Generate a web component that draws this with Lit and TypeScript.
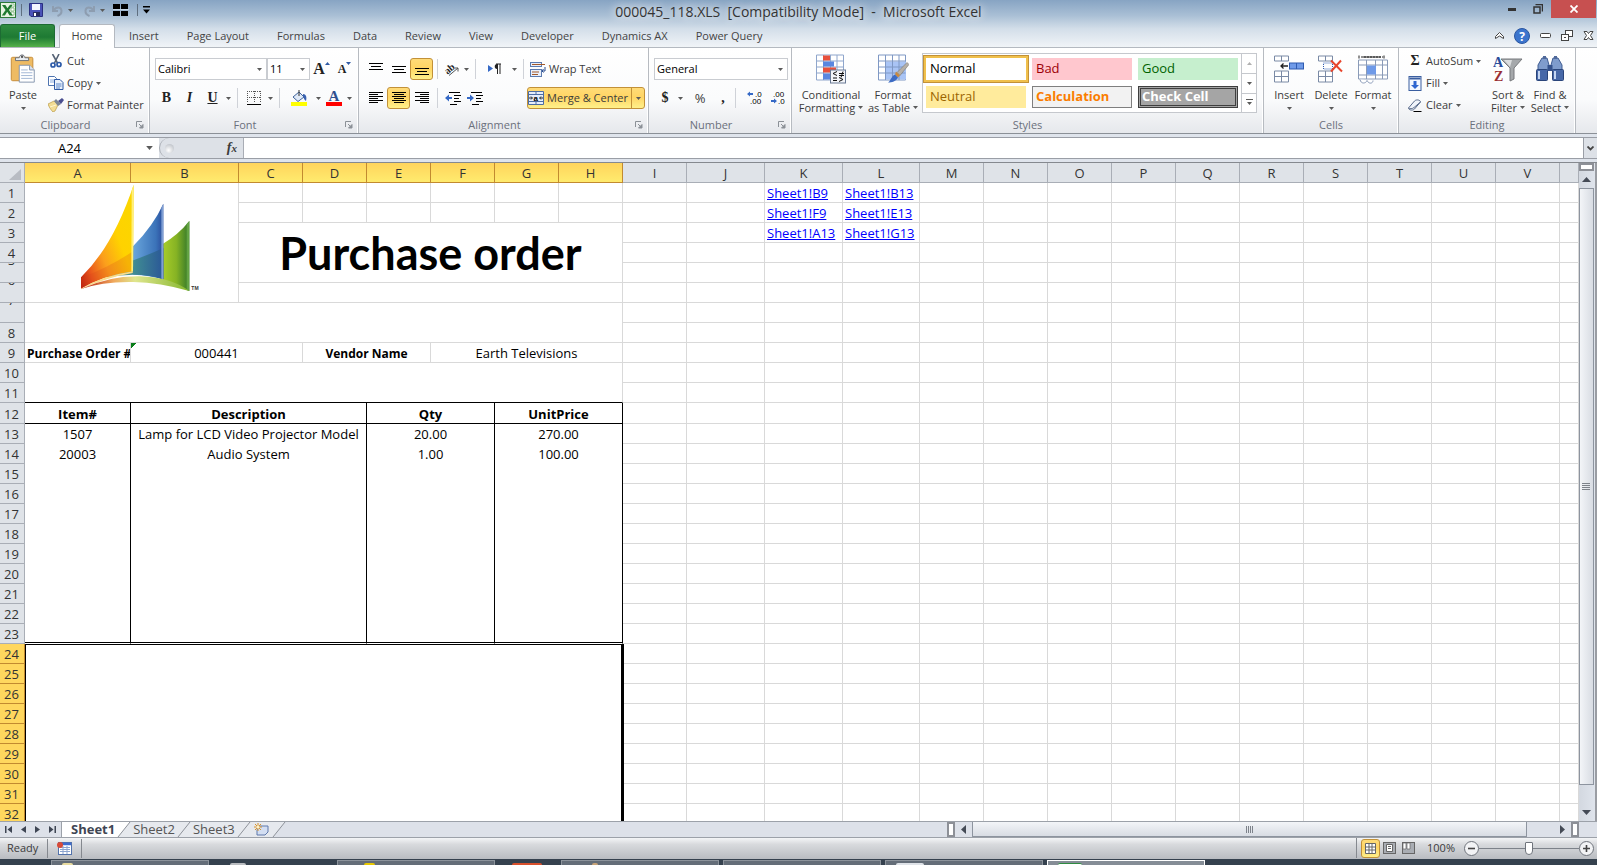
import { LitElement, html, svg, css, nothing } from "lit";
import { customElement, state } from "lit/decorators.js";
import { classMap } from "lit/directives/class-map.js";

const COLUMNS: [string, number][] = [
  ["A", 106], ["B", 108], ["C", 64], ["D", 64], ["E", 64], ["F", 64], ["G", 64], ["H", 64],
  ["I", 64], ["J", 78], ["K", 78], ["L", 77], ["M", 64], ["N", 64], ["O", 64], ["P", 64],
  ["Q", 64], ["R", 64], ["S", 64], ["T", 64], ["U", 64], ["V", 64],
];
const ROWS = Array.from({ length: 32 }, (_, i) => i + 1);
const LINKS: Record<string, string> = {
  K1: "Sheet1!B9", L1: "Sheet1!B13", K2: "Sheet1!F9", L2: "Sheet1!E13", K3: "Sheet1!A13", L3: "Sheet1!G13",
};
const ITEMS: Record<number, string[]> = {
  13: ["1507", "Lamp for LCD Video Projector Model", "20.00", "270.00"],
  14: ["20003", "Audio System", "1.00", "100.00"],
};
const TABS = ["Insert", "Page Layout", "Formulas", "Data", "Review", "View", "Developer", "Dynamics AX", "Power Query"];

const icon = (w: number, h: number, body: unknown) =>
  html`<svg class="ico" width=${w} height=${h} viewBox="0 0 ${w} ${h}" aria-hidden="true">${body}</svg>`;

const caret = html`<svg class="caret" width="5" height="3" viewBox="0 0 5 3" aria-hidden="true"><path d="M0 0h5L2.5 3z" fill="#5a5a5a" /></svg>`;

const lines = (spec: [number, number, number][], w = 16, h = 14) =>
  icon(w, h, spec.map(([x, y, len]) => svg`<rect x=${x} y=${y} width=${len} height="1" fill="#000"/>`));

const icons = {
  excel: icon(16, 16, svg`<rect x=".5" y=".5" width="15" height="15" fill="#e7f3e3" stroke="#2d7a3a"/><path d="M11 2h3v3h-3zM11 6h3v3h-3zM11 10h3v3h-3z" fill="#fff" stroke="#5fa35f" stroke-width=".6"/><path d="M2 3h3.4l2 3.3L9.8 3h2.8L9 8l3.8 5.4H9.6L7.2 9.8 4.9 13.4H1.8L5.6 8z" fill="#1f7a30"/>`),
  save: icon(14, 14, svg`<path d="M.5.5h13v13H2L.5 12z" fill="#4a52b8" stroke="#2a2f80"/><rect x="3" y="1" width="8" height="6" fill="#f4f6ff"/><rect x="4" y="9" width="7" height="4" fill="#272b60"/><rect x="5" y="10" width="2" height="3" fill="#fff"/>`),
  undo: icon(13, 13, svg`<path d="M2 2v5h5M2.5 6.5C5 2.5 10 2.5 10.5 6.5 10.7 9 9 11 6.5 12" fill="none" stroke="#8d9db0" stroke-width="2"/>`),
  redo: icon(13, 13, svg`<path d="M11 2v5H6M10.5 6.5C8 2.5 3 2.5 2.5 6.5 2.3 9 4 11 6.5 12" fill="none" stroke="#8d9db0" stroke-width="2"/>`),
  tiles: icon(16, 12, svg`<path d="M0 0h7v5H0zM8 0h7v5H8zM0 7h7v5H0zM8 7h7v5H8z"/><path d="M0 5.5h16" stroke="#dfe8f0" stroke-width=".6"/>`),
  custom: icon(7, 8, svg`<path d="M0 0h7v1.5H0zM0 3.5h7L3.5 7.5z"/>`),
  paste: icon(28, 32, svg`<rect x="1.5" y="3.5" width="23" height="25" rx="1.5" fill="#eebb63" stroke="#c48a35"/><path d="M6 7V4h4c0-4 6-4 6 0h4v3z" fill="#e9edf1" stroke="#6a6f77"/><circle cx="13" cy="3" r="1.3" fill="#555"/><path d="M10 12h11l5 5v13H10z" fill="#fff" stroke="#8193ad"/><path d="M21 12v5h5" fill="#dbe4f2" stroke="#8193ad"/><path d="M12 17h7M12 20h12M12 23h12M12 26h12" stroke="#9fb4d3"/>`),
  cut: icon(12, 14, svg`<path d="M2.5 0 7.5 9M9 0 4.5 9" stroke="#566375" stroke-width="1.6"/><circle cx="3" cy="11" r="2" fill="none" stroke="#2c5aa8" stroke-width="1.7"/><circle cx="9" cy="10.5" r="2" fill="none" stroke="#2c5aa8" stroke-width="1.7"/>`),
  copy: icon(16, 14, svg`<path d="M.5.5h6l2 2v7h-8z" fill="#fff" stroke="#4e74b0"/><path d="M2 4h5M2 6h5" stroke="#86a8db"/><path d="M6.5 3.5h5.5l3 3v7H6.5z" fill="#eaf1fb" stroke="#2f5aa5"/><path d="M8 8h5.5M8 10h5.5M8 12h4" stroke="#5b86c8"/>`),
  painter: icon(16, 14, svg`<path d="M0 6l6-3 4 4-3 6-2 1C3 12 1 9 0 6z" fill="#f3dd94" stroke="#b99a45" stroke-width=".7"/><path d="M2 9l6-2" stroke="#fff6cf"/><path d="M6 3l2-2 5 5-3 2z" fill="#7d8694"/><path d="M10 3l4-3 2 2-3 4z" fill="#4a4e8f"/>`),
  launch: icon(8, 8, svg`<path d="M.5 6V.5H6" fill="none" stroke="#8b9097"/><path d="M3 3l3.5 3.5M7 3.5V7H3.5z" stroke="#8b9097" fill="#8b9097"/>`),
  borders: icon(14, 14, svg`<path d="M.5 0v12M13.5 0v12M0 .5h14M7.5 0v12M0 6.5h14" fill="none" stroke="#555" stroke-dasharray="1 1"/><path d="M0 13.5h14" stroke="#000"/>`),
  bucket: icon(17, 16, svg`<rect y="12" width="16" height="4" fill="#ff0"/><path d="M2 7l6-5 5 5-6 4.500z" fill="#dfe9f7" stroke="#40649b"/><path d="M8 0v6" stroke="#333"/><path d="M12 4c3 0 4 3 3 7-2-1-2-3-3-5z" fill="#3a62b0"/>`),
  orient: icon(20, 18, svg`<text x="3" y="12" font-size="10" font-weight="bold" font-family="Liberation Serif" fill="#222" transform="rotate(-40 8 10)">ab</text><path d="M7 15.500 16 8M16 8h-3.500M16 8v3.500" stroke="#555" fill="none"/>`),
  rtl: icon(14, 12, svg`<path d="M0 2l5 3.500L0 9z" fill="#3569c6"/><path d="M8 1h5M9.500 1v10M12 1v10" stroke="#222" fill="none"/><path d="M9 1c-3 0-3 5 0 5z" fill="#222"/>`),
  wrap: icon(16, 15, svg`<rect x=".5" y=".5" width="11" height="4" fill="#eaf0fa" stroke="#5b7bb0"/><path d="M2 2.500h13" stroke="#a55a2a"/><rect x=".5" y="7.500" width="11" height="7" fill="#eaf0fa" stroke="#5b7bb0"/><path d="M2 10h7M2 12.500h6" stroke="#a55a2a"/><path d="M15 5v4h-3M13.500 7 12 9l1.500 1.500" stroke="#274b8f" fill="none"/>`),
  merge: icon(16, 14, svg`<path d="M.5.5h15v13H.5zM.5 3.500h15M.5 10.500h15M8 .5v3M8 10.500v3" fill="#e6eefa" stroke="#4d6da3"/><path d="M1 7h3M12 7h3M3 5.500 4.500 7 3 8.500M13 5.500 11.500 7 13 8.500" stroke="#222" fill="none"/><text x="5.500" y="9.500" font-size="8" font-weight="bold" font-family="Liberation Sans">a</text>`),
  decInd: icon(16, 13, svg`<path d="M4 .5h11M9 3.500h7M9 6.500h5M9 9.500h7M5 12.500h7" stroke="#000"/><path d="M0 6l4-3.500v2.500h3v2H4v2.500z" fill="#3569c6"/>`),
  incInd: icon(16, 13, svg`<path d="M4 .5h11M9 3.500h7M9 6.500h5M9 9.500h7M5 12.500h7" stroke="#000"/><path d="M7 6 3 2.500v2.500H0v2h3v2.500z" fill="#3569c6"/>`),
  incDec: icon(16, 16, svg`<path d="M0 4l3-2.500V3h3v2H3v1.500z" fill="#3569c6"/><text x="8" y="7" font-size="8" font-family="Liberation Sans">.0</text><text x="3" y="14" font-size="8" font-family="Liberation Sans">.00</text>`),
  decDec: icon(16, 16, svg`<path d="M7 11 4 8.500V10H1v2h3v1.500z" fill="#3569c6"/><text x="3" y="7" font-size="8" font-family="Liberation Sans">.00</text><text x="8" y="14" font-size="8" font-family="Liberation Sans">.0</text>`),
  condFmt: icon(30, 29, svg`<path d="M.5.5h27v25H.5zM.5 6.500h27M.5 12.500h27M.5 18.500h27M7.500.5v25M14.500.5v25M21 .5v25" fill="#fff" stroke="#8fa6cc"/><rect x="7" y="1" width="7" height="5" fill="#e8503c"/><rect x="7" y="7" width="11" height="5" fill="#5a86e0"/><rect x="7" y="13" width="13" height="5" fill="#e8503c"/><rect x="7" y="19" width="7" height="6" fill="#5a86e0"/><rect x="14.500" y="15.500" width="15" height="13" fill="#f4f6fa" stroke="#6a7a95"/><path d="M21 17l-4 2 4 2M17 23.500h4M17 26h4M23 19h5M23 21h5M27 17l-2 6M23 23l4 2-4 2" stroke="#111" fill="none"/>`),
  table: icon(31, 29, svg`<path d="M.5.5h27v25H.5z" fill="#fff" stroke="#7f98c4"/><rect x="7" y="7" width="21" height="18" fill="#a9c4f5"/><path d="M.5 6.500h27M.5 12.500h27M.5 18.500h27M7.500.5v25M14.500.5v25M21 .5v25" stroke="#7f98c4"/><path d="M29 8l2 2-9 11-3-3z" fill="#b6b0a8" stroke="#7b756c" stroke-width=".6"/><path d="M18 17l4 4-2 2-3-3z" fill="#c98a3f"/><path d="M17 20l3 3c-2 4-6 5-10 5 3-2 3-6 7-8z" fill="#3d6cc4"/>`),
  insert: icon(31, 27, svg`<path d="M.5.5h14v5H.5zM7.500.5v5M.5 15.500h14v11H.5zM.5 21h14M7.500 15.500v11" fill="#fff" stroke="#7a8aa5"/><rect x="15.500" y="7.500" width="14" height="6" fill="#6f9ae8" stroke="#2f5bb0"/><path d="M22.500 7.500v6" stroke="#2f5bb0"/><path d="M14 10.500H7M9.500 8 7 10.500 9.500 13" stroke="#222" fill="none" stroke-width="1.3"/>`),
  remove: icon(26, 27, svg`<path d="M.5.5h14v5H.5zM7.500.5v5M.5 15.500h14v11H.5zM.5 21h14M7.500 15.500v11" fill="#fff" stroke="#7a8aa5"/><path d="M5.500 7.500h9v6h-9z" fill="none" stroke="#2f5bb0" stroke-dasharray="1 1"/><path d="M13 5l11 11M23 5 13 16" stroke="#e8452c" stroke-width="2"/>`),
  format: icon(31, 29, svg`<path d="M1 1v3M26 1v3M5 2.500h18" stroke="#222"/><path d="M3 2.500h22" stroke="#222" stroke-dasharray="2 1"/><path d="M.5 5.500h29v19H.5zM.5 10.500h29M.5 20.500h29M8.500 5.500v19M17.500 5.500v19M24.500 5.500v19" fill="#fff" stroke="#8a9bb8"/><rect x="9" y="11" width="9" height="9" fill="#6f9ae8"/><path d="M2 25c1 5 6 4 7 1 2 4 6 3 6 0" fill="#fff" stroke="#8a9bb8"/>`),
  fill: icon(13, 15, svg`<rect x=".5" y=".5" width="12" height="14" fill="#f4f8ff" stroke="#3a5ea0"/><path d="M1 2.500h11" stroke="#3a5ea0" stroke-width="2"/><path d="M5 5h3v4h2.500l-4 4-4-4H5z" fill="#2f66d0"/>`),
  eraser: icon(15, 13, svg`<path d="M1 9l6-7c2-2 6-1 6 1l-6 7c-2 2-6 1-6-1z" fill="#f0f4fb" stroke="#5a6c8c"/><path d="M1 9c1 1 4 1 5.500-.5L13 3" fill="none" stroke="#5a6c8c"/><path d="M6 12.500h8" stroke="#000"/>`),
  sort: icon(30, 30, svg`<path d="M8 5h21l-8 9v11l-4 2V14z" fill="#a5a8ab" stroke="#77797c"/><path d="M11 6h8l-2 7z" fill="#dcdedf"/><text x="0" y="13" font-size="14" font-weight="bold" font-family="Liberation Serif" fill="#2a4c9a">A</text><text x="1" y="27" font-size="14" font-weight="bold" font-family="Liberation Serif" fill="#9a2f33">Z</text>`),
  find: icon(28, 26, svg`<path d="M6 2h5l2 7v5H2V9zM17 2h5l4 7v5H15V9z" fill="#7f9ccc" stroke="#3f5c92"/><rect x="7" width="3" height="3" fill="#50699a"/><rect x="18" width="3" height="3" fill="#50699a"/><rect x=".5" y="13.500" width="11" height="11" rx="1" fill="#4768a8" stroke="#2a457a"/><rect x="16.500" y="13.500" width="11" height="11" rx="1" fill="#4768a8" stroke="#2a457a"/><path d="M3 15v8M19 15v8" stroke="#c5d6f2" stroke-width="2"/><rect x="11.500" y="9" width="5" height="6" fill="#35528c"/>`),
  newSheet: icon(15, 13, svg`<path d="M5 3h9v6l-3 3H3V7z" fill="#d3def2" stroke="#5e78ab"/><path d="M4 0v8M0 4h8M1 1l6 6M7 1 1 7" stroke="#d9932b"/><circle cx="4" cy="4" r="1.5" fill="#fff3c9"/>`),
  macro: icon(15, 14, svg`<rect x="1.500" y="1.500" width="13" height="12" fill="#fff" stroke="#5272ab"/><path d="M2 3h12" stroke="#3d6bd0" stroke-width="2.5"/><path d="M3 6.500h10M3 8.500h10M3 10.500h10M6 5v8M10 5v8" stroke="#8ba4cf"/><circle cx="3" cy="4" r="3" fill="#d84a38"/>`),
};

const logo = html`<svg class="logo" width="120" height="118" viewBox="243 70 360 354" role="img" aria-label="Company logo">
  <defs>
    <linearGradient id="y" x1="0" y1="1" x2=".9" y2=".3"><stop offset="0" stop-color="#b5180c" /><stop offset=".2" stop-color="#e8541c" /><stop offset=".45" stop-color="#fb9f1c" /><stop offset=".75" stop-color="#ffd200" /><stop offset="1" stop-color="#fcd500" /></linearGradient>
    <linearGradient id="b" x1="0" y1="0" x2="1" y2="0"><stop offset="0" stop-color="#6aa6dc" /><stop offset=".75" stop-color="#3b73b9" /><stop offset="1" stop-color="#2a4b9b" /></linearGradient>
    <linearGradient id="t" x1="0" y1="0" x2="1" y2="0"><stop offset="0" stop-color="#7ba98c" /><stop offset=".5" stop-color="#3f8a93" /><stop offset="1" stop-color="#2a5797" /></linearGradient>
    <linearGradient id="g" x1="0" y1="0" x2="1" y2="0"><stop offset="0" stop-color="#b8d92c" /><stop offset=".6" stop-color="#86b324" /><stop offset="1" stop-color="#31762a" /></linearGradient>
    <linearGradient id="s" x1="0" y1="0" x2="1" y2="0"><stop offset="0" stop-color="#b5180c" /><stop offset=".3" stop-color="#f0a85c" /><stop offset=".5" stop-color="#dfe68e" /><stop offset="1" stop-color="#84b62c" /></linearGradient>
  </defs>
  <path d="M568 181Q535 222 488 250L470 350Q525 372 568 391z" fill="url(#g)" />
  <path d="M560 190l8-9v210l-8-3z" fill="#63a343" />
  <path d="M490 129Q460 195 399 257V342Q450 344 490 356z" fill="url(#b)" />
  <path d="M490 262Q440 285 380 306L320 350Q420 332 490 356z" fill="url(#t)" />
  <path d="M484 142l6-13v227l-6-2z" fill="#7f9fd4" />
  <path d="M401 72Q340 255 243 350V384Q310 345 399 332z" fill="url(#y)" />
  <path d="M243 352Q330 318 399 272V332Q310 345 243 384z" fill="#d8431a" opacity=".22" />
  <path d="M395 90l6-18-2 260-5 1z" fill="#fff07a" />
  <path d="M243 384Q310 345 399 332L398 337Q320 350 243 386z" fill="#f9dc8b" />
  <path d="M243 385Q330 345 420 347T568 391Q480 366 400 364 310 362 243 385z" fill="url(#s)" />
  <text x="574" y="389" font-size="15" font-weight="bold" font-family="Liberation Sans" fill="#333">TM</text>
</svg>`;

@customElement("app-root")
class AppRoot extends LitElement {
  @state() private sheet = "Sheet1";

  static styles = css`
    :host { display: flex; flex-direction: column; height: 100vh; overflow: hidden; font: 11px/14px "Open Sans", "Noto Sans", sans-serif; color: #3b3b3b; background: #dfe4ec; }
    * { box-sizing: border-box; }
    button { display: inline-flex; align-items: center; justify-content: center; flex: none; gap: 4px; margin: 0; padding: 0; border: 0; background: none; font: inherit; color: inherit; white-space: nowrap; }
    svg { display: block; flex: none; }
    a { color: #00f; }

    .chrome { background: linear-gradient(#87a4c3, #a9bfd5 32%, #d3dee9 60%, #f2f5f8); }
    .title { display: grid; grid-template-columns: 1fr auto 1fr; height: 24px; }
    .quick { display: flex; align-items: center; height: 20px; gap: 5px; }
    .quick i { width: 1px; height: 12px; background: #5f6f80; }
    .quick .save { margin: 0 3px 0 2px; }
    .quick .tiles { margin: 0 3px; }
    .quick .redo { margin-left: 5px; }
    .doc { margin: 0; font-size: 14px; line-height: 24px; font-weight: 400; white-space: pre; color: #333; text-shadow: 0 0 8px #fff, 0 0 12px #fff; }
    .win { display: flex; justify-content: flex-end; }
    .win button { width: 26px; height: 18px; }
    .win .close { width: 45px; margin-right: 1px; background: #c75050; }

    .tabs { display: flex; height: 24px; border-bottom: 1px solid #b4b9c0; font-size: 11px; }
    .tabs > button { padding: 0 14px; height: 23px; color: #444; }
    .tabs > .file { width: 55px; margin-right: 4px; border: 1px solid #1d6b33; border-bottom: 0; border-radius: 3px 3px 0 0; color: #fff; background: linear-gradient(#2f8b40, #1e7a33 55%, #55b14a); }
    .tabs > .home { width: 56px; height: 24px; padding-bottom: 2px; border: 1px solid #b4b9c0; border-bottom: 0; border-radius: 3px 3px 0 0; background: #fff; }
    .tools { display: flex; align-items: center; margin-left: auto; padding-right: 3px; gap: 10px; }

    .ribbon { display: flex; height: 86px; border-bottom: 1px solid #8b9097; background: linear-gradient(#fff, #fafbfc 60%, #e6e8ec); }
    .group { display: flex; flex-direction: column; flex: none; border-right: 1px solid #b7bbc1; box-shadow: inset -1px 0 #fff; }
    .clipboard { width: 150px; }
    .fonts { width: 209px; }
    .align { width: 290px; }
    .number { width: 143px; }
    .styles { width: 472px; }
    .cells { width: 135px; }
    .editing { width: 177px; }
    .body { display: flex; height: 69px; }
    .cells .body { padding-left: 4px; }
    .editing .body { padding-left: 8px; }
    .foot { display: flex; height: 16px; align-items: center; text-align: center; color: #6b707c; }
    .foot span { flex: 1; }
    .foot button { width: 18px; }

    .big { flex-direction: column; justify-content: flex-start; gap: 0; width: 42px; padding-top: 6px; line-height: 13px; }
    .big .ico { height: 30px; margin-bottom: 4px; }
    .big .caret { margin-top: 6px; }
    .big .row .caret { margin: 0 0 0 3px; }
    .big.w46 { width: 46px; }
    .big.w78 { width: 78px; }
    .row { display: flex; align-items: center; }
    .stack { display: flex; flex-direction: column; align-items: flex-start; padding-top: 2px; }
    .stack button { height: 22px; gap: 3px; }
    .stack .ico { width: 16px; }
    .clipboard .stack { padding-left: 2px; }
    .editing .stack { width: 80px; }
    .editing .stack .serif { width: 16px; }
    .two { display: flex; flex-direction: column; gap: 7px; padding: 10px 0 0 5px; }
    .line { display: flex; align-items: center; height: 22px; }
    .combo { display: grid; align-items: center; height: 22px; }
    .combo select { grid-area: 1 / 1; width: 100%; height: 22px; padding: 0 2px; border: 1px solid #c9ccd1; border-radius: 0; background: #fff; appearance: none; font: inherit; color: #000; }
    .combo .caret { grid-area: 1 / 1; justify-self: end; margin-right: 5px; }
    .w112 { width: 112px; }
    .w43 { width: 43px; }
    .w134 { width: 134px; }
    .w9 { width: 9px; height: 22px; }
    .w16 { width: 16px; height: 22px; }
    .w20 { width: 20px; height: 22px; }
    .w22 { width: 22px; height: 22px; }
    .w23 { width: 23px; height: 22px; }
    .w24 { width: 24px; height: 22px; }
    .w30 { width: 30px; height: 22px; }
    .on { border: 1px solid #c29138; border-radius: 3px; background: linear-gradient(#ffdb78, #ffd564 45%, #fff08a); }
    .sep { width: 1px; height: 20px; margin: 0 4px; background: #cfd2d8; }
    .serif { font-family: "Liberation Serif", serif; font-weight: 700; font-size: 14px; color: #222; }
    .serif.it { font-style: italic; }
    .serif.un { text-decoration: underline; }
    .serif.lg { font-size: 16px; gap: 0; }
    .serif.md { font-size: 12px; gap: 0; }
    .grow { margin-bottom: 12px; }
    .percent { font-size: 13px; }
    .red { font: 700 15px/12px "Liberation Serif", serif; color: #2f5090; border-bottom: 4px solid #f00; width: 16px; flex: none; text-align: center; }
    .wrap { justify-content: flex-start; padding-left: 2px; width: 118px; height: 22px; gap: 3px; }
    .mc { width: 118px; height: 22px; margin-left: auto; margin-right: 3px; gap: 3px; justify-content: flex-end; }
    .mc .caret { margin: 0 3px 0 1px; }
    .mc i { width: 1px; align-self: stretch; background: #c29138; }

    .gallery { display: flex; width: 335px; height: 60px; margin: 5px 0 0 6px; border: 1px solid #c5c8cd; background: #fff; }
    .swatches { display: grid; grid-template-columns: repeat(3, 100px); grid-auto-rows: 22px; gap: 6px; padding: 4px 3px; font-size: 13px; }
    .swatches button { justify-content: flex-start; padding: 0 0 2px 4px; }
    .normal { color: #000; outline: 2px solid #f0c04c; box-shadow: 0 0 0 3px #c29138; background: #fff; }
    .bad { background: #ffc7ce; color: #9c0006; }
    .good { background: #c6efce; color: #006100; }
    .neutral { background: #ffeb9c; color: #9c6500; }
    .swatches .calc { border: 1px solid #7f7f7f; padding-left: 3px; background: #f2f2f2; color: #fa7d00; font-weight: 700; }
    .swatches .check { border: 3px double #3f3f3f; padding-left: 1px; background: #a5a5a5; color: #fff; font-weight: 700; }
    .spin { display: grid; grid-template-rows: repeat(3, 1fr); width: 15px; margin-left: auto; border-left: 1px solid #c5c8cd; }
    .spin button + button { border-top: 1px solid #c5c8cd; }

    .formula { display: flex; height: 22px; margin: 3px 0; border: solid #9a9ea6; border-width: 1px 0; background: #dde1e7; }
    .formula input { border: 0; padding: 0; outline: 0; background: #fff; font: 13px "Open Sans", sans-serif; color: #000; }
    .name { display: flex; align-items: center; gap: 7px; width: 159px; padding-right: 6px; background: #fff; }
    .name input { flex: 1; min-width: 0; text-align: center; }
    .name .caret { width: 7px; height: 4px; }
    .fx { display: flex; flex: none; width: 85px; align-items: center; justify-content: space-between; padding: 0 6px 0 5px; border: solid #a9adb5; border-width: 0 1px; border-radius: 11px 0 0 11px; background: #dde1e7; }
    .fx i { width: 9px; height: 9px; border-radius: 50%; background: radial-gradient(circle at 40% 70%, #fff, #b0b5bd); }
    .fx button { font: italic 700 14px "Liberation Serif", serif; gap: 0; }
    .fx small { font-size: 11px; }
    .formula .value { flex: 1; }
    .formula .expand { width: 14px; border-left: 1px solid #9a9ea6; }

    .main { display: flex; flex: 1; min-height: 0; border-top: 1px solid #85898f; }
    .grid { flex: 1; min-width: 0; overflow: hidden; background: #fff; }
    table { width: 100%; table-layout: fixed; border-collapse: separate; border-spacing: 0; font: 13px/17px "Open Sans", "Noto Sans", sans-serif; color: #000; }
    tr { height: 20px; }
    tr.tall { height: 21px; }
    th, td { padding: 2px 0 0; border: solid #d9d9d9; border-width: 0 1px 1px 0; text-align: center; font-weight: 400; white-space: nowrap; overflow: hidden; }
    thead th, tbody th { background: #dfe3e8; border-color: #a9aeb6; color: #333; }
    thead th { height: 20px; }
    thead th.sel { background: linear-gradient(#ffd45c, #ffeb6e); border-color: #c28a30; }
    tbody th.sel { background: #ffd75e; border-color: #c28a30; }
    tbody th div { height: 17px; padding-right: 1px; overflow: hidden; }
    tbody th.cut { padding-top: 0; }
    tbody th.cut div { height: 19px; }
    tbody th.cut span { display: block; margin-top: -11px; }
    .corner svg { margin: 1px 0 0 9px; }
    td.left { text-align: left; padding-left: 2px; }
    td.b { font-weight: 700; }
    td.field { font-weight: 700; font-size: 12px; }
    td.pic { padding: 0 0 0 56px; }
    td.big-title { padding: 0; font: 700 45px/58px Lato, Carlito, sans-serif; }
    td.flag { background: linear-gradient(135deg, #0a7d1a 4px, transparent 4px); }
    td.ink-b { border-bottom-color: #000; }
    td.ink-r { border-right-color: #000; }
    td.open { padding-bottom: 1px; border-bottom-width: 0; }
    td.last { border-bottom-color: #fff; box-shadow: inset 0 -1px #000; }
    td.range { border: solid #000; border-width: 1px 2px 0 1px; box-shadow: 1px 0 #000; position: relative; }

    .vbar { display: flex; flex-direction: column; align-items: center; width: 18px; padding-right: 2px; border-right: 2px solid #9a9da3; background: linear-gradient(90deg, #d3d8e0, #dfe4ec); }
    .split { width: 15px; height: 8px; border: 2px solid #8d9097; background: #fff; }
    .vbar button { width: 15px; height: 17px; }
    .vthumb { display: flex; flex: 1; align-items: center; justify-content: center; width: 15px; border: 1px solid #8d949f; background: linear-gradient(90deg, #f3f5f8, #d8dce3); }
    .vend { margin-top: 19px; }

    .sheets { display: flex; height: 17px; border: solid #9ca1a9; border-width: 1px 0; background: #dde1e9; }
    .nav { display: flex; align-items: center; justify-content: space-around; width: 62px; border-right: 1px solid #9ca1a9; }
    .sheet { font-size: 13px; line-height: 15px; color: #555; padding: 0 2px; background: #e6e9ee; }
    .sheet.active { padding-left: 9px; background: #fff; font-weight: 700; color: #3f4654; }
    .new { padding: 0 3px; background: #e6e9ee; }
    .hbar { display: flex; width: 650px; margin-left: auto; }
    .hsplit { width: 8px; border: 2px solid #8d9097; background: #fff; }
    .hbar button { width: 17px; }
    .hthumb { display: flex; flex: 1; align-items: center; justify-content: center; border: 1px solid #8d949f; border-width: 0 1px 1px; background: linear-gradient(#f3f5f8, #d8dce3); }
    .hgap { width: 27px; }
    .hcorner { width: 18px; }

    .status { display: flex; align-items: center; height: 21px; padding: 0 3px 1px 7px; background: linear-gradient(#f4f5f7, #d8dadd 30%, #b9bcc1); }
    .status i { width: 1px; height: 19px; margin: 0 9px; background: #85898f; }
    .zoom { display: flex; align-items: center; margin-left: auto; height: 20px; padding-left: 4px; border-left: 1px solid #85898f; }
    .zoom button { width: 19px; height: 19px; }
    .zoom label { margin: 0 9px; }
    .zoom .round { width: 15px; height: 15px; border: 1px solid #6f747c; border-radius: 8px; background: #f2f3f5; }
    .zoom input { width: 100px; height: 15px; margin: 0; appearance: none; background: linear-gradient(#7d828a, #7d828a) center / 100% 1px no-repeat; }
    .zoom input::-webkit-slider-thumb { appearance: none; width: 8px; height: 13px; border: 1px solid #6f747c; border-radius: 1px 1px 4px 4px; background: #fff; }

    .task { display: flex; align-items: flex-end; height: 6px; gap: 4px; padding-left: 51px; background: #35414e; overflow: hidden; }
    .task div { width: 158px; height: 5px; padding: 2px 0 0 10px; border: 1px solid #8c939b; border-bottom: 0; background: #646d78; }
    .task .bare { border-color: transparent; background: none; width: 120px; padding-left: 16px; }
    .task .bare.narrow { width: 58px; padding-left: 12px; }
    .task .front { border-color: #fff; background: #858d96; }
    .task span { display: block; width: 11px; height: 3px; border-radius: 2px 2px 0 0; }
    .task .folder { background: #e9dca0; }
    .task .grey { background: #b9bcc0; width: 16px; }
    .task .sun { background: #e8c800; margin-left: 16px; }
    .task .orange { background: #d8502c; width: 30px; }
    .task .tan { background: #c9a479; margin-left: 20px; width: 6px; }
    .task .page { background: #dfe3e8; width: 28px; }
    .task .green { background: #fff; width: 24px; border-top: 1px solid #2f8b40; }
  `;

  private foot(name: string, launcher = true) {
    return html`<div class="foot"><span>${name}</span>${launcher ? html`<button aria-label="${name} settings">${icons.launch}</button>` : nothing}</div>`;
  }

  private ribbon() {
    return html`<div class="ribbon">
      <section class="group clipboard">
        <div class="body">
          <button class="big w46">${icons.paste}Paste${caret}</button>
          <div class="stack">
            <button>${icons.cut}Cut</button>
            <button>${icons.copy}Copy ${caret}</button>
            <button>${icons.painter}Format Painter</button>
          </div>
        </div>
        ${this.foot("Clipboard")}
      </section>
      <section class="group fonts">
        <div class="body two">
          <div class="line">
            <div class="combo w112"><select aria-label="Font"><option>Calibri</option></select>${caret}</div>
            <div class="combo w43"><select aria-label="Font size"><option>11</option></select>${caret}</div>
            <button class="serif lg w23" aria-label="Grow font">A<svg class="grow" width="5" height="3" viewBox="0 0 5 3"><path d="M0 3h5L2.500 0z" fill="#2f5aa5" /></svg></button>
            <button class="serif md w23" aria-label="Shrink font">A<svg class="grow" width="5" height="3" viewBox="0 0 5 3"><path d="M0 0h5L2.500 3z" fill="#2f5aa5" /></svg></button>
          </div>
          <div class="line">
            <button class="serif w23">B</button><button class="serif it w23">I</button><button class="serif un w23">U</button>
            <button class="w9" aria-label="Underline options">${caret}</button><div class="sep"></div>
            <button class="w24" aria-label="Borders">${icons.borders}</button><button class="w9" aria-label="Border options">${caret}</button><div class="sep"></div>
            <button class="w30" aria-label="Fill color">${icons.bucket}</button><button class="w9" aria-label="Fill options">${caret}</button>
            <button class="w22"><span class="red">A</span></button><button class="w9" aria-label="Font color options">${caret}</button>
          </div>
        </div>
        ${this.foot("Font")}
      </section>
      <section class="group align">
        <div class="body two">
          <div class="line">
            <button class="w23" aria-label="Top align">${lines([[1, 1, 14], [3, 4, 10], [1, 7, 14]])}</button>
            <button class="w23" aria-label="Middle align">${lines([[1, 4, 14], [3, 7, 10], [1, 10, 14]])}</button>
            <button class="w23 on" aria-label="Bottom align">${lines([[1, 6, 14], [3, 9, 10], [1, 12, 14]])}</button>
            <div class="sep"></div>
            <button class="w20" aria-label="Orientation">${icons.orient}</button><button class="w9" aria-label="Orientation options">${caret}</button>
            <div class="sep"></div>
            <button class="w30" aria-label="Text direction">${icons.rtl}</button><button class="w9" aria-label="Direction options">${caret}</button>
            <div class="sep"></div>
            <button class="wrap">${icons.wrap}Wrap Text</button>
          </div>
          <div class="line">
            <button class="w23" aria-label="Align left">${lines([[1, 1, 14], [1, 3, 9], [1, 5, 14], [1, 7, 9], [1, 9, 14], [1, 11, 9]])}</button>
            <button class="w23 on" aria-label="Center">${lines([[1, 1, 14], [3, 3, 10], [1, 5, 14], [3, 7, 10], [1, 9, 14], [3, 11, 10]])}</button>
            <button class="w23" aria-label="Align right">${lines([[1, 1, 14], [6, 3, 9], [1, 5, 14], [6, 7, 9], [1, 9, 14], [6, 11, 9]])}</button>
            <div class="sep"></div>
            <button class="w22" aria-label="Decrease indent">${icons.decInd}</button>
            <button class="w22" aria-label="Increase indent">${icons.incInd}</button>
            <button class="mc on">${icons.merge}<span>Merge &amp; Center</span><i></i>${caret}</button>
          </div>
        </div>
        ${this.foot("Alignment")}
      </section>
      <section class="group number">
        <div class="body two">
          <div class="line"><div class="combo w134"><select aria-label="Number format"><option>General</option></select>${caret}</div></div>
          <div class="line">
            <button class="serif w22">$</button><button class="w9" aria-label="Currency options">${caret}</button>
            <button class="percent w30">%</button><button class="serif w16">,</button>
            <div class="sep"></div>
            <button class="w30" aria-label="Increase decimal">${icons.incDec}</button><button class="w16" aria-label="Decrease decimal">${icons.decDec}</button>
          </div>
        </div>
        ${this.foot("Number")}
      </section>
      <section class="group styles">
        <div class="body">
          <button class="big w78">${icons.condFmt}<span>Conditional</span><span class="row">Formatting${caret}</span></button>
          <button class="big w46">${icons.table}<span>Format</span><span class="row">as Table${caret}</span></button>
          <div class="gallery">
            <div class="swatches">
              <button class="normal">Normal</button><button class="bad">Bad</button><button class="good">Good</button>
              <button class="neutral">Neutral</button><button class="calc">Calculation</button><button class="check">Check Cell</button>
            </div>
            <div class="spin">
              <button aria-label="Scroll up"><svg width="5" height="3" viewBox="0 0 5 3"><path d="M0 3h5L2.500 0z" fill="#b0b0b0" /></svg></button>
              <button aria-label="Scroll down">${caret}</button>
              <button aria-label="More styles"><svg width="7" height="7" viewBox="0 0 7 7"><path d="M0 0h7v1H0zM1 3h5L3.500 6z" fill="#5a5a5a" /></svg></button>
            </div>
          </div>
        </div>
        ${this.foot("Styles", false)}
      </section>
      <section class="group cells">
        <div class="body">
          <button class="big">${icons.insert}Insert${caret}</button>
          <button class="big">${icons.remove}Delete${caret}</button>
          <button class="big">${icons.format}Format${caret}</button>
        </div>
        ${this.foot("Cells", false)}
      </section>
      <section class="group editing">
        <div class="body">
          <div class="stack">
            <button><span class="serif">Σ</span>AutoSum ${caret}</button>
            <button>${icons.fill}Fill ${caret}</button>
            <button>${icons.eraser}Clear ${caret}</button>
          </div>
          <button class="big">${icons.sort}<span>Sort &amp;</span><span class="row">Filter${caret}</span></button>
          <button class="big">${icons.find}<span>Find &amp;</span><span class="row">Select${caret}</span></button>
        </div>
        ${this.foot("Editing", false)}
      </section>
    </div>`;
  }

  private leftCells(r: number) {
    if (r === 1 || r === 2) {
      return html`${r === 1 ? html`<td class="pic" colspan="2" rowspan="6">${logo}</td>` : nothing}
        ${[0, 1, 2, 3, 4, 5].map(() => html`<td></td>`)}`;
    }
    if (r === 3) return html`<td class="big-title" colspan="6" rowspan="3">Purchase order</td>`;
    if (r === 6) return html`<td colspan="6"></td>`;
    if (r === 7) return html`<td colspan="8" rowspan="2"></td>`;
    if (r === 9) {
      return html`<td class="field left">Purchase Order #</td><td class="flag" colspan="2">000441</td>
        <td class="field" colspan="2">Vendor Name</td><td colspan="3">Earth Televisions</td>`;
    }
    if (r === 10) return html`<td class="ink-b" colspan="8" rowspan="2"></td>`;
    if (r === 12) {
      return html`<td class="b ink-b ink-r">Item#</td><td class="b ink-b ink-r" colspan="3">Description</td>
        <td class="b ink-b ink-r" colspan="2">Qty</td><td class="b ink-b ink-r" colspan="2">UnitPrice</td>`;
    }
    if (r >= 13 && r <= 23) {
      const spans = [1, 3, 2, 2];
      return spans.map((n, i) => html`<td class="ink-r ${r === 23 ? "last" : "open"}" colspan=${n}>${ITEMS[r]?.[i] ?? nothing}</td>`);
    }
    if (r === 24) return html`<td class="range" colspan="8" rowspan="9"></td>`;
    return nothing;
  }

  private grid() {
    return html`<div class="grid"><table>
      <colgroup><col style="width:25px" />${COLUMNS.map(([, w]) => html`<col style="width:${w}px" />`)}<col /></colgroup>
      <thead><tr>
        <th class="corner"><svg width="12" height="11" viewBox="0 0 12 11"><path d="M12 0v11H0z" fill="#b8bcc3" /></svg></th>
        ${COLUMNS.map(([c], i) => html`<th scope="col" class=${i < 8 ? "sel" : ""}>${c}</th>`)}<th></th>
      </tr></thead>
      <tbody>${ROWS.map((r) => html`<tr class=${r === 12 ? "tall" : ""}>
        <th scope="row" class=${classMap({ sel: r > 23, cut: r > 4 && r < 8 })}><div><span>${r}</span></div></th>
        ${this.leftCells(r)}
        ${COLUMNS.slice(8).map(([c]) => {
          const link = LINKS[c + r];
          return link ? html`<td class="left"><a href="#${link}">${link}</a></td>` : html`<td></td>`;
        })}<td></td>
      </tr>`)}</tbody>
    </table></div>`;
  }

  private slant(from: string, to: string) {
    return html`<svg width="14" height="15" viewBox="0 0 14 15"><path d="M0 0h14v15H0z" fill=${to} /><path d="M0 0h13L1 15H0z" fill=${from} /><path d="M13 0 1 15" stroke="#8d9299" fill="none" /></svg>`;
  }

  render() {
    return html`
      <header class="chrome">
        <div class="title">
          <div class="quick">${icons.excel}<i></i><button class="save" aria-label="Save">${icons.save}</button>
            <button aria-label="Undo">${icons.undo}${caret}</button><button class="redo" aria-label="Redo">${icons.redo}${caret}</button>
            <button class="tiles" aria-label="Tiles">${icons.tiles}</button><i></i><button aria-label="Customize">${icons.custom}</button></div>
          <h1 class="doc">000045_118.XLS  [Compatibility Mode]  -  Microsoft Excel</h1>
          <div class="win">
            <button aria-label="Minimize"><svg width="8" height="3"><rect width="8" height="3" fill="#333" /></svg></button>
            <button aria-label="Restore"><svg width="10" height="10" viewBox="0 0 10 10"><path d="M1 3h6v6H1zM2.500 .5h7v7" fill="none" stroke="#333" stroke-width="1.5" /></svg></button>
            <button class="close" aria-label="Close"><svg width="8" height="8" viewBox="0 0 8 8"><path d="M.5.5l7 7M7.500.5l-7 7" stroke="#fff" stroke-width="1.8" /></svg></button>
          </div>
        </div>
        <nav class="tabs">
          <button class="file">File</button><button class="home">Home</button>
          ${TABS.map((t) => html`<button>${t}</button>`)}
          <div class="tools">
            <svg width="9" height="7" viewBox="0 0 9 7"><path d="M.5 4.500l4-4 4 4v2l-4-2.500-4 2.500z" fill="#fff" stroke="#444" /></svg>
            <svg width="16" height="16" viewBox="0 0 16 16"><circle cx="8" cy="8" r="7.500" fill="#3b74cd" stroke="#2a56a0" /><text x="8" y="12.500" text-anchor="middle" font-size="12" font-weight="bold" fill="#fff" font-family="Open Sans">?</text></svg>
            <svg width="11" height="5" viewBox="0 0 11 5"><rect x=".5" y=".5" width="10" height="4" rx="1" fill="#fff" stroke="#444" /></svg>
            <svg width="12" height="11" viewBox="0 0 12 11"><rect x="4.500" y=".5" width="7" height="6" fill="#fff" stroke="#444" /><rect x=".5" y="4.500" width="7" height="6" fill="#fff" stroke="#444" /><rect x="3" y="7" width="2" height="1" fill="#444" /></svg>
            <svg width="11" height="9" viewBox="0 0 11 9"><path d="M1 .5h3l1.500 2L7 .5h3L7.500 4.500 10 8.500H7L5.500 6.500 4 8.500H1L3.500 4.500z" fill="#fff" stroke="#444" /></svg>
          </div>
        </nav>
      </header>
      ${this.ribbon()}
      <div class="formula">
        <div class="name"><input aria-label="Name box" value="A24" />${caret}</div>
        <div class="fx"><i></i><button aria-label="Insert function">f<small>x</small></button></div>
        <input class="value" aria-label="Formula" />
        <button class="expand" aria-label="Expand"><svg width="7" height="5" viewBox="0 0 7 5"><path d="M.5.5l3 3 3-3" fill="none" stroke="#444" stroke-width="1.8" /></svg></button>
      </div>
      <main class="main">
        ${this.grid()}
        <div class="vbar">
          <div class="split"></div>
          <button aria-label="Scroll up"><svg width="9" height="5" viewBox="0 0 9 5"><path d="M0 5h9L4.500 0z" fill="#444a55" /></svg></button>
          <div class="vthumb"><svg width="8" height="7" viewBox="0 0 8 7"><path d="M0 .5h8M0 2.500h8M0 4.500h8M0 6.500h8" stroke="#7d828a" /></svg></div>
          <button class="vend" aria-label="Scroll down"><svg width="9" height="5" viewBox="0 0 9 5"><path d="M0 0h9L4.500 5z" fill="#444a55" /></svg></button>
        </div>
      </main>
      <div class="sheets">
        <div class="nav">
          <button aria-label="First sheet"><svg width="7" height="7" viewBox="0 0 7 7"><path d="M0 0h1.500v7H0zM7 0v7L2.500 3.500z" fill="#3f4654" /></svg></button>
          <button aria-label="Previous sheet"><svg width="5" height="7" viewBox="0 0 5 7"><path d="M5 0v7L0 3.500z" fill="#3f4654" /></svg></button>
          <button aria-label="Next sheet"><svg width="5" height="7" viewBox="0 0 5 7"><path d="M0 0v7l5-3.500z" fill="#3f4654" /></svg></button>
          <button aria-label="Last sheet"><svg width="7" height="7" viewBox="0 0 7 7"><path d="M5.500 0H7v7H5.500zM0 0v7l4.500-3.500z" fill="#3f4654" /></svg></button>
        </div>
        ${["Sheet1", "Sheet2", "Sheet3"].map((s) => html`<button class=${classMap({ sheet: true, active: s === this.sheet })} @click=${() => (this.sheet = s)}>${s}</button>${this.slant(s === this.sheet ? "#fff" : "#e6e9ee", "#e6e9ee")}`)}
        <button class="new" aria-label="New sheet">${icons.newSheet}</button>${this.slant("#e6e9ee", "#dde1e9")}
        <div class="hbar">
          <div class="hsplit"></div>
          <button aria-label="Scroll left"><svg width="5" height="9" viewBox="0 0 5 9"><path d="M5 0v9L0 4.500z" fill="#444a55" /></svg></button>
          <div class="hthumb"><svg width="7" height="7" viewBox="0 0 7 7"><path d="M.5 0v7M2.500 0v7M4.500 0v7M6.500 0v7" stroke="#7d828a" /></svg></div>
          <div class="hgap"></div>
          <button aria-label="Scroll right"><svg width="5" height="9" viewBox="0 0 5 9"><path d="M0 0v9l5-4.500z" fill="#444a55" /></svg></button>
          <div class="hsplit"></div><div class="hcorner"></div>
        </div>
      </div>
      <footer class="status">
        Ready<i></i>${icons.macro}<i></i>
        <div class="zoom">
          <button class="on" aria-label="Normal view"><svg width="11" height="11" viewBox="0 0 11 11"><path d="M.5.5h10v10H.5zM.5 4h10M.5 7h10M4 .5v10M7 .5v10" fill="#fff" stroke="#666" /></svg></button>
          <button aria-label="Page layout view"><svg width="13" height="12" viewBox="0 0 13 12"><rect x=".5" y=".5" width="12" height="11" fill="#a9adb3" stroke="#666" /><path d="M3.500 2.500h6v7h-6z" fill="#fff" stroke="#666" /><path d="M5 4.500h3M5 6.500h3" stroke="#666" /></svg></button>
          <button aria-label="Page break view"><svg width="13" height="12" viewBox="0 0 13 12"><rect x=".5" y=".5" width="12" height="11" fill="#a9adb3" stroke="#666" /><path d="M1 1h3v6H1zM5 1h3v6H5z" fill="#fff" stroke="#666" stroke-width=".7" /></svg></button>
          <label for="zoom">100%</label>
          <button class="round" aria-label="Zoom out"><svg width="7" height="7" viewBox="0 0 7 7"><path d="M0 3.500h7" stroke="#444" stroke-width="1.6" /></svg></button>
          <input id="zoom" type="range" min="0" max="200" value="100" />
          <button class="round" aria-label="Zoom in"><svg width="7" height="7" viewBox="0 0 7 7"><path d="M0 3.500h7M3.500 0v7" stroke="#444" stroke-width="1.6" /></svg></button>
        </div>
      </footer>
      <div class="task">
        <div><span class="folder"></span></div><div class="bare"><span class="grey"></span></div>
        <div><span class="sun"></span></div><div class="bare narrow"><span class="orange"></span></div>
        <div><span class="tan"></span></div><div></div><div><span class="page"></span></div><div class="front"><span class="green"></span></div>
      </div>
    `;
  }
}
